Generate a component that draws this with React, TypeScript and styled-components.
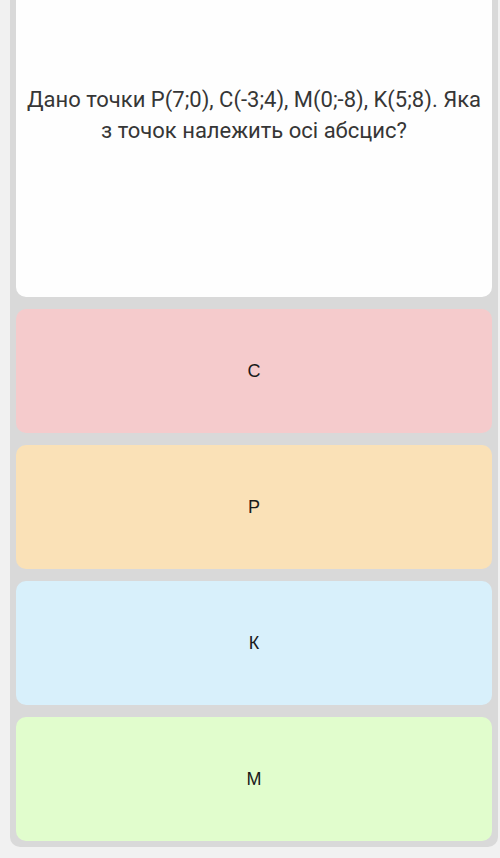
import styled, { createGlobalStyle } from "styled-components";

const GlobalStyle = createGlobalStyle`
  html, body {
    margin: 0;
    padding: 0;
    background: #f1f1f1;
  }
  body {
    font-family: Roboto, "Liberation Sans", sans-serif;
  }
`;

const answers = [
  { label: "С", color: "#f5cbcc" },
  { label: "Р", color: "#fae1b7" },
  { label: "К", color: "#d8f0fb" },
  { label: "М", color: "#e1fdcd" },
];

function App() {
  return (
    <>
      <GlobalStyle />
      <Page>
        <Quiz>
          <Question>
            <QuestionText>
              Дано точки P(7;0), C(-3;4), M(0;-8), K(5;8). Яка з точок належить
              осі абсцис?
            </QuestionText>
          </Question>
          {answers.map((a) => (
            <Answer key={a.label} $bg={a.color}>
              {a.label}
            </Answer>
          ))}
        </Quiz>
      </Page>
    </>
  );
}

const Page = styled.div`
  padding: 0 2px 10px 10px;
  /* page is scrolled a little past the top of the question card */
  margin-top: -60px;
`;

const Quiz = styled.div`
  display: flex;
  flex-direction: column;
  gap: 12px;
  padding: 6px;
  background: #d9d9d9;
  border-radius: 10px;
`;

const Question = styled.div`
  background: #fefefe;
  border-radius: 10px;
  height: 351px;
  display: flex;
  align-items: center;
  justify-content: center;
  padding: 0 10px 14px;
  box-sizing: border-box;
`;

const QuestionText = styled.p`
  margin: 0;
  font-family: Roboto, "Liberation Sans", sans-serif;
  font-size: 22px;
  line-height: 31px;
  color: #363636;
  text-align: center;
`;

const Answer = styled.div<{ $bg: string }>`
  height: 124px;
  display: flex;
  align-items: center;
  justify-content: center;
  background: ${(p) => p.$bg};
  border-radius: 10px;
  font-family: "Liberation Sans", Arial, sans-serif;
  font-size: 18px;
  color: #1a1a1a;
`;

export default App;
